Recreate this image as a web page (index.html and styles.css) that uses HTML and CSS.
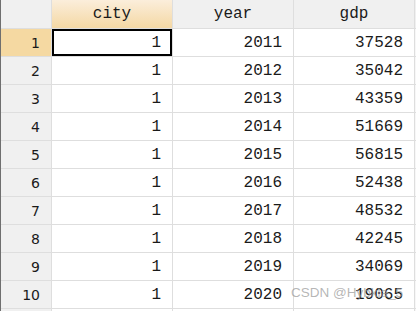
FILE: index.html
```html
<!DOCTYPE html>
<html>
<head>
<meta charset="utf-8">
<link rel="stylesheet" href="styles.css">
</head>
<body>
<div class="sheet">
  <div class="grid">
    <div class="corner"></div>
    <div class="colhead sel">city</div>
    <div class="colhead">year</div>
    <div class="colhead">gdp</div>
    <div class="colhead fill"></div>

    <div class="rowhead sel">1</div><div class="cell active">1</div><div class="cell">2011</div><div class="cell">37528</div><div class="cell fill"></div>
    <div class="rowhead">2</div><div class="cell">1</div><div class="cell">2012</div><div class="cell">35042</div><div class="cell fill"></div>
    <div class="rowhead">3</div><div class="cell">1</div><div class="cell">2013</div><div class="cell">43359</div><div class="cell fill"></div>
    <div class="rowhead">4</div><div class="cell">1</div><div class="cell">2014</div><div class="cell">51669</div><div class="cell fill"></div>
    <div class="rowhead">5</div><div class="cell">1</div><div class="cell">2015</div><div class="cell">56815</div><div class="cell fill"></div>
    <div class="rowhead">6</div><div class="cell">1</div><div class="cell">2016</div><div class="cell">52438</div><div class="cell fill"></div>
    <div class="rowhead">7</div><div class="cell">1</div><div class="cell">2017</div><div class="cell">48532</div><div class="cell fill"></div>
    <div class="rowhead">8</div><div class="cell">1</div><div class="cell">2018</div><div class="cell">42245</div><div class="cell fill"></div>
    <div class="rowhead">9</div><div class="cell">1</div><div class="cell">2019</div><div class="cell">34069</div><div class="cell fill"></div>
    <div class="rowhead">10</div><div class="cell">1</div><div class="cell">2020</div><div class="cell">19065</div><div class="cell fill"></div>
    <div class="rowhead"></div><div class="cell"></div><div class="cell"></div><div class="cell"></div><div class="cell fill"></div>
  </div>
  <div class="watermark">CSDN @Hybkia_5</div>
</div>
</body>
</html>
```
FILE: styles.css
```css
html, body {
  margin: 0;
  padding: 0;
  background: #ffffff;
}
.sheet {
  position: relative;
  width: 416px;
  height: 311px;
  overflow: hidden;
  border-left: 1px solid #6f6f6f;
  box-sizing: border-box;
}
.grid {
  display: grid;
  grid-template-columns: 51px 121px 121px 121px 1fr;
  grid-template-rows: 29px repeat(11, 28px);
}
.grid > div {
  box-sizing: border-box;
  border-right: 1px solid #dedede;
  border-bottom: 1px solid #dedede;
  display: flex;
  align-items: center;
}
.corner {
  background: #f0f0f0;
}
.colhead {
  background: #f0f0f0;
  justify-content: center;
  font-family: "Liberation Mono", monospace;
  font-size: 16px;
  color: #1a1a1a;
  padding-bottom: 1px;
}
.colhead.sel {
  background: linear-gradient(#fbeedb, #f4d8a4);
}
.colhead.fill {
  background: #f0f0f0;
}
.rowhead {
  background: #f0f0f0;
  justify-content: flex-end;
  padding-right: 11px;
  font-family: "DejaVu Sans", sans-serif;
  font-size: 14px;
  color: #1a1a1a;
}
.rowhead.sel {
  background: #f5d9a2;
}
.cell {
  background: #fff;
  justify-content: flex-end;
  padding-right: 11px;
  font-family: "Liberation Mono", monospace;
  font-size: 16px;
  color: #1a1a1a;
}
.cell.fill {
  background: #f7f7f7;
}
.cell.active {
  box-shadow: inset 0 0 0 2px #000;
}
.watermark {
  position: absolute;
  left: 290px;
  top: 285px;
  font-family: "Liberation Sans", sans-serif;
  font-size: 13.5px;
  color: rgba(150, 150, 150, 0.7);
  white-space: nowrap;
}
```
